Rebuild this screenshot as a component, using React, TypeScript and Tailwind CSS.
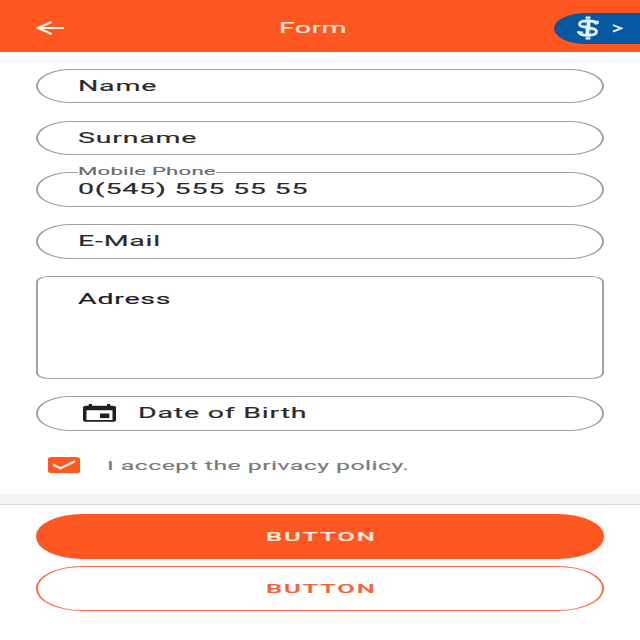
import type { ReactNode } from "react";

// Wide lettering: the text keeps its own line box and is widened from its anchor side.
function Wide({ children, className = "" }: { children: ReactNode; className?: string }) {
  return (
    <span className={`inline-block whitespace-nowrap leading-none [-webkit-text-stroke:0.15px_currentColor] ${className}`}>
      {children}
    </span>
  );
}

function Field({ children, className = "" }: { children: ReactNode; className?: string }) {
  return (
    <div
      className={`flex items-center rounded-[35px/17px] border border-x-[2px] border-[#a0a0a0] pt-[2px] pl-[40px] text-[14.400px] text-[#2a2a2a] ${className}`}
    >
      {children}
    </div>
  );
}

function CalendarIcon() {
  return (
    <svg width="33" height="18" viewBox="0 0 32 18" preserveAspectRatio="none" className="-mt-[4px] ml-[5px] shrink-0">
      <path
        fill="#231f20"
        fillRule="evenodd"
        d="M5.500 0h3.200v1.800h14.600V0h3.200v1.800h2.300Q32 1.800 32 3.600V16Q32 17.800 28.800 17.800H3.200Q0 17.800 0 16V3.600Q0 1.800 3.200 1.800H5.500ZM3.400 6.200V16H28.600V6.200Z"
      />
      <path fill="#231f20" d="M16.500 9.500h9v4.600h-9z" />
    </svg>
  );
}

export default function App() {
  return (
    <div className="flex h-[640px] w-[640px] flex-col overflow-hidden bg-white font-['Roboto',sans-serif]">
      <header className="flex h-[51.500px] shrink-0 items-center bg-[#ff5722] pt-[5px] text-white">
        <svg width="29" height="14" viewBox="0 0 29 14" className="ml-[36px]">
          <path d="M28 7H2M15.500 1L2 7l13.500 6" fill="none" stroke="#fff6e8" strokeWidth="2" />
        </svg>
        <Wide className="ml-[213.500px] w-[66px] origin-left scale-x-[1.9] text-[15px] tracking-[0.200px] text-[#ffe9dc]">Form</Wide>
        <div className="ml-auto flex h-[31px] w-[86px] items-center rounded-[32px_0_0_32px/15.5px_0_0_15.5px] bg-[#0758a2]">
          <svg width="24" height="24" viewBox="0 0 24 24" className="ml-[22px]">
            <g fill="none" stroke="#e4f3fb">
              <path d="M12 0.500v23" strokeWidth="4.800" />
              <path
                d="M20.500 8.500C20 4.800 15 4.800 11 4.800C6 4.800 3.500 6.200 3.500 8.200C3.500 12.400 20.500 10.800 20.500 15.500C20.500 18.200 17 19.300 12 19.300C6.500 19.300 3 18.400 2.500 15.200"
                strokeWidth="2.800"
              />
              <path d="M16 5.500h6v2.500M1 16.200h6" strokeWidth="1.400" />
            </g>
            <path d="M10.300 6.500v3M13.700 14.500v3" stroke="#0758a2" strokeWidth="0.900" />
            <path d="M9 3h6M9 21h6" stroke="#0758a2" strokeWidth="0.500" />
          </svg>
          <svg width="11" height="9" viewBox="0 0 10 9" preserveAspectRatio="none" className="ml-[12px]">
            <path d="M0.800 1L8.500 4.300L0.800 7.600" fill="none" stroke="#e4f3fb" strokeWidth="1.800" />
          </svg>
        </div>
      </header>

      <main className="flex h-[442.500px] shrink-0 flex-col px-[36px] pt-[17.500px]">
        <Field className="h-[34px]">
          <Wide className="origin-left scale-x-[1.98] tracking-[0.400px]">Name</Wide>
        </Field>
        <Field className="mt-[18px] h-[34px]">
          <Wide className="origin-left scale-x-[1.98] tracking-[0.400px]">Surname</Wide>
        </Field>
        <Field className="relative mt-[17px] h-[35px]">
          <span className="absolute -top-[8px] left-[40px] flex h-[14px] w-[138px] items-center bg-white">
            <Wide className="origin-left scale-x-[1.93] text-[11.500px] tracking-[0.100px] text-[#6a6a6a]">Mobile Phone</Wide>
          </span>
          <Wide className="origin-left scale-x-[1.985] tracking-[0.400px]">0(545) 555 55 55</Wide>
        </Field>
        <Field className="mt-[17px] h-[35px]">
          <Wide className="origin-left scale-x-[1.98] tracking-[0.400px]">E-Mail</Wide>
        </Field>
        <div className="mt-[17px] h-[103px] rounded-[13px/6px] border border-x-[2px] border-[#a0a0a0] pt-[12px] pl-[40px] text-[14.400px] text-[#1c1c1c]">
          <Wide className="origin-left scale-x-[1.98] tracking-[0.400px]">Adress</Wide>
        </div>
        <Field className="mt-[17px] h-[35px]">
          <CalendarIcon />
          <Wide className="ml-[22px] origin-left scale-x-[1.98] tracking-[0.400px]">Date of Birth</Wide>
        </Field>
        <div className="mt-[26px] flex h-[16px] items-center pl-[12px]">
          <span className="flex h-[16px] w-[32px] items-center justify-center rounded-[4px/2px] bg-[#ff5722]">
            <svg width="24" height="10" viewBox="0 0 24 10">
              <path d="M1 4.600L8.500 8.200L23 1.200" fill="none" stroke="#fff3ea" strokeWidth="2.300" />
            </svg>
          </span>
          <Wide className="ml-[27px] origin-left scale-x-[1.915] text-[13px] tracking-[0.220px] text-[#7a7a7a]">
            I accept the privacy policy.
          </Wide>
        </div>
      </main>

      <div className="h-[11px] shrink-0 border-b border-[#d8d8d8] bg-[#f3f3f3]" />

      <footer className="flex flex-col gap-[7px] px-[36px] pt-[9px]">
        <button className="flex h-[45px] items-center justify-center rounded-[46px/22px] bg-[#ff5722] text-[#ffeadd]">
          <Wide className="ml-[2px] scale-x-[1.95] text-[13px] font-medium tracking-[1px]">BUTTON</Wide>
        </button>
        <button className="flex h-[45px] items-center justify-center rounded-[46px/22px] border border-x-[2px] border-[#f8704b] text-[#f4623a]">
          <Wide className="ml-[2px] scale-x-[1.95] text-[13px] font-medium tracking-[1px]">BUTTON</Wide>
        </button>
      </footer>
    </div>
  );
}
